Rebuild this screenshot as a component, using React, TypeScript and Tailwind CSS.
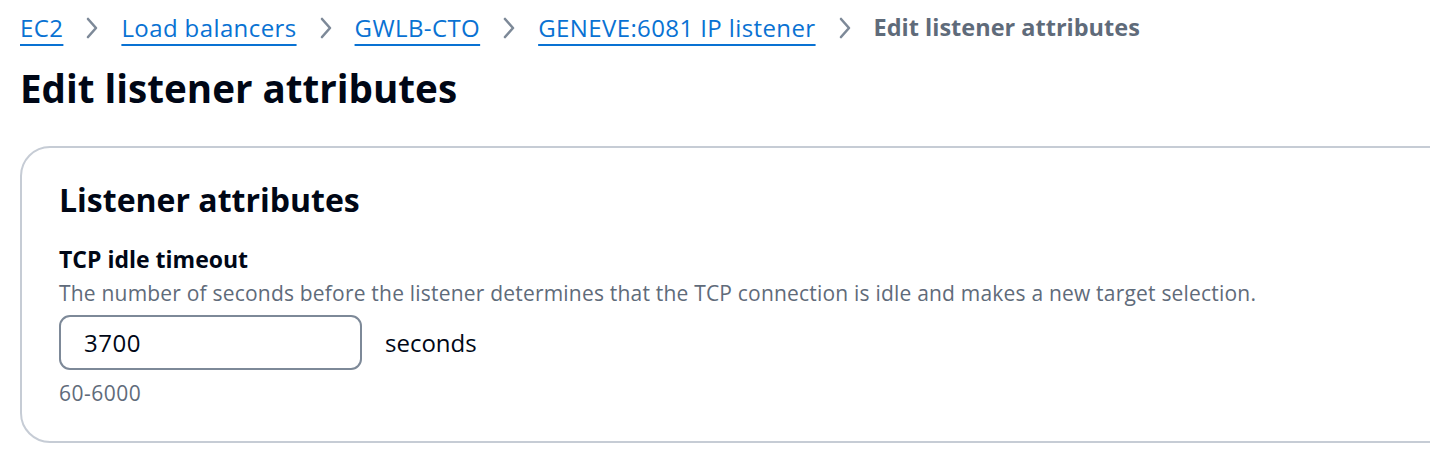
import React from "react";

function Chevron() {
  return (
    <svg width="14" height="24" viewBox="0 0 14 24" className="mx-[22px] shrink-0" aria-hidden>
      <path d="M3 3 L11 12 L3 21" fill="none" stroke="#7d8998" strokeWidth="2.6" strokeLinecap="round" strokeLinejoin="round" />
    </svg>
  );
}

function Crumb({ children }: { children: React.ReactNode }) {
  return (
    <a className="text-[#0972d3] underline decoration-[2px] underline-offset-[7px] leading-none tracking-[0.4px] cursor-pointer">
      {children}
    </a>
  );
}

export default function App() {
  return (
    <div
      className="w-[1430px] h-[464px] overflow-hidden bg-white pl-[20px]"
      style={{ fontFamily: '"Open Sans", "Noto Sans", sans-serif' }}
    >
      <nav className="flex items-center pt-[13px] text-[24px] h-[43px]">
        <Crumb>EC2</Crumb>
        <Chevron />
        <Crumb>Load balancers</Crumb>
        <Chevron />
        <Crumb>GWLB-CTO</Crumb>
        <Chevron />
        <Crumb>GENEVE:6081 IP listener</Crumb>
        <Chevron />
        <span className="font-bold text-[#5f6b7a] leading-none text-[23.5px]">Edit listener attributes</span>
      </nav>
      <h1 className="mt-[21px] text-[38.6px] font-bold text-[#000716] leading-[48px]">Edit listener attributes</h1>
      <section className="mt-[34px] w-[1440px] h-[297px] border-2 border-[#c6ccd5] rounded-[30px] pl-[37px] pt-[30px]">
        <h2 className="text-[32px] font-bold text-[#000716] leading-[44px]">Listener attributes</h2>
        <div className="mt-[22px] text-[23px] font-bold text-[#000716] leading-[30px]">TCP idle timeout</div>
        <div className="mt-[4px] text-[21px] text-[#5f6b7a] leading-[30px] tracking-[0.2px]">
          The number of seconds before the listener determines that the TCP connection is idle and makes a new target selection.
        </div>
        <div className="mt-[7px] flex items-center">
          <div className="w-[303px] h-[55px] border-[2.5px] border-[#7d8998] rounded-[11px] flex items-center pl-[23px] text-[24px] text-[#000716] tracking-[0.5px]">
            3700
          </div>
          <span className="ml-[23px] text-[24px] text-[#000716]">seconds</span>
        </div>
        <div className="mt-[10px] text-[21px] text-[#5f6b7a] leading-[26px] tracking-[0.5px]">60-6000</div>
      </section>
    </div>
  );
}
